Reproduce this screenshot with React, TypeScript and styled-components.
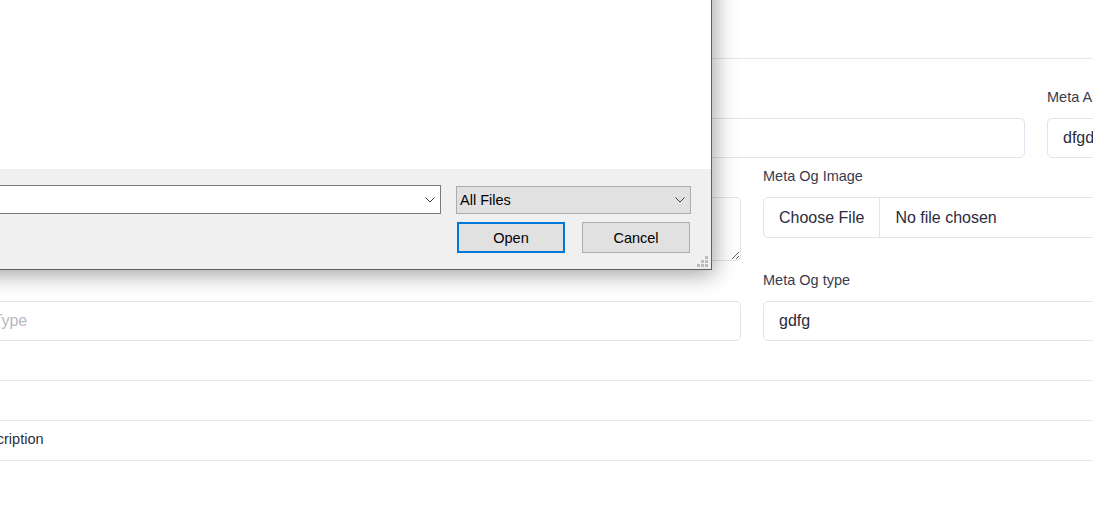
import React from 'react';
import styled, { createGlobalStyle } from 'styled-components';

const GlobalStyle = createGlobalStyle`
  html, body {
    margin: 0;
    padding: 0;
    background: #fff;
    overflow: hidden;
  }
  body {
    font-family: 'Liberation Sans', Arial, sans-serif;
  }
`;

const Screen = styled.div`
  position: relative;
  width: 1093px;
  height: 517px;
  overflow: hidden;
  background: #fff;
`;

// page behind the dialog
const Card = styled.div`
  margin-left: -89px;
  width: 1682px;
  color: #3f4254;
`;
const CardHeader = styled.div`
  height: 58px;
  display: flex;
  align-items: center;
  padding-left: 30px;
  font-size: 17px;
  font-weight: 600;
  border-bottom: 1px solid #e6e5f0;
`;
const CardBody = styled.div`
  padding-top: 28px;
`;
const Row = styled.div<{ $cols: number; $mb: number }>`
  display: grid;
  grid-template-columns: repeat(${({ $cols }) => $cols}, 1fr);
  column-gap: 22px;
  align-items: start;
  margin-bottom: ${({ $mb }) => $mb}px;
`;
const Field = styled.div`
  display: flex;
  flex-direction: column;
  min-width: 0;
`;
const Label = styled.label`
  font-size: 14.5px;
  line-height: 20px;
  margin-bottom: 11px;
  color: #3a3b4c;
`;
const TextInput = styled.input`
  box-sizing: border-box;
  height: 40px;
  padding: 0 15px;
  font-family: 'Liberation Sans', Arial, sans-serif;
  font-size: 16px;
  color: #2b2c3c;
  border: 1px solid #e3e2ee;
  border-radius: 5px;
  outline: none;
  background: #fff;
  &::placeholder {
    color: #b9b8c6;
  }
`;
const TextArea = styled.textarea`
  box-sizing: border-box;
  height: 64px;
  padding: 10px 15px;
  font-family: 'Liberation Sans', Arial, sans-serif;
  font-size: 16px;
  border: 1px solid #e3e2ee;
  border-radius: 5px;
  outline: none;
  resize: vertical;
`;
const FileBox = styled.div`
  box-sizing: border-box;
  height: 41px;
  display: flex;
  align-items: stretch;
  border: 1px solid #e3e2ee;
  border-radius: 5px;
  font-size: 16px;
  color: #2b2c3c;
`;
const FileButton = styled.span`
  display: flex;
  align-items: center;
  padding: 0 15px;
  border-right: 1px solid #e3e2ee;
`;
const FileName = styled.span`
  display: flex;
  align-items: center;
  padding: 0 15px;
`;
const List = styled.div`
  margin-top: 39px;
  border-bottom: 1px solid #e6e5f0;
`;
const ListRow = styled.div`
  box-sizing: border-box;
  height: 40px;
  display: flex;
  align-items: center;
  padding: 0 0 3px 60px;
  border-top: 1px solid #e6e5f0;
  font-size: 14.5px;
  color: #2b2c3c;
`;

// windows open-file dialog on top
const Dialog = styled.div`
  position: absolute;
  left: -202px;
  top: -231px;
  width: 912px;
  height: 499px;
  display: flex;
  flex-direction: column;
  background: #fff;
  border: 1px solid #5f5f5f;
  box-shadow: 2px 4px 22px rgba(0, 0, 0, 0.38);
  font-family: 'Liberation Sans', Arial, sans-serif;
  font-size: 14.5px;
  color: #000;
  z-index: 10;
`;
const FilePane = styled.div`
  flex: 1;
  background: #fff;
`;
const Footer = styled.div`
  position: relative;
  box-sizing: border-box;
  height: 100px;
  padding: 16px 20px 0 20px;
  display: flex;
  flex-direction: column;
  gap: 8px;
  background: #f0f0f0;
`;
const FooterRow = styled.div`
  display: flex;
  align-items: center;
  gap: 15px;
`;
const ButtonRow = styled.div`
  display: flex;
  justify-content: flex-end;
  gap: 17px;
  padding-right: 1px;
`;
const NameLabel = styled.span`
  flex: none;
  margin-right: -5px;
`;
const Combo = styled.div`
  flex: 1;
  box-sizing: border-box;
  height: 29px;
  display: flex;
  align-items: center;
  justify-content: flex-end;
  padding-right: 5px;
  background: #fff;
  border: 1px solid #7a7a7a;
`;
const TypeSelect = styled.div`
  flex: none;
  box-sizing: border-box;
  width: 235px;
  height: 28px;
  display: flex;
  align-items: center;
  justify-content: space-between;
  padding: 0 5px 0 3px;
  background: #e1e1e1;
  border: 1px solid #adadad;
`;
const DlgButton = styled.button<{ $primary?: boolean }>`
  box-sizing: border-box;
  width: 108px;
  height: 31px;
  padding: 0;
  font-family: 'Liberation Sans', Arial, sans-serif;
  font-size: 14.5px;
  color: #000;
  background: #e1e1e1;
  border: ${({ $primary }) => ($primary ? '2px solid #0078d7' : '1px solid #adadad')};
`;
const Grip = styled.svg`
  position: absolute;
  right: 2px;
  bottom: 1px;
`;

function Chevron() {
  return (
    <svg width="10" height="6" viewBox="0 0 10 6">
      <path d="M0.5 0.5 L5 5 L9.5 0.5" fill="none" stroke="#404040" strokeWidth="1" />
    </svg>
  );
}

export default function App() {
  return (
    <Screen>
      <GlobalStyle />
      <Card>
        <CardHeader>SEO Settings</CardHeader>
        <CardBody>
          <Row $cols={3} $mb={8}>
            <Field>
              <Label>Meta Title</Label>
              <TextInput placeholder="Meta Title" />
            </Field>
            <Field>
              <Label>Meta Keywords</Label>
              <TextInput />
            </Field>
            <Field>
              <Label>Meta Author</Label>
              <TextInput defaultValue="dfgdfg" />
            </Field>
          </Row>
          <Row $cols={2} $mb={9}>
            <Field>
              <Label>Meta Description</Label>
              <TextArea />
            </Field>
            <Field>
              <Label>Meta Og Image</Label>
              <FileBox>
                <FileButton>Choose File</FileButton>
                <FileName>No file chosen</FileName>
              </FileBox>
            </Field>
          </Row>
          <Row $cols={2} $mb={0}>
            <Field>
              <Label>Meta Type</Label>
              <TextInput placeholder="Meta Og Type" />
            </Field>
            <Field>
              <Label>Meta Og type</Label>
              <TextInput defaultValue="gdfg" />
            </Field>
          </Row>
          <List>
            <ListRow />
            <ListRow>Description</ListRow>
          </List>
        </CardBody>
      </Card>

      <Dialog>
        <FilePane />
        <Footer>
          <FooterRow>
            <NameLabel>File name:</NameLabel>
            <Combo>
              <Chevron />
            </Combo>
            <TypeSelect>
              <span>All Files</span>
              <Chevron />
            </TypeSelect>
          </FooterRow>
          <ButtonRow>
            <DlgButton $primary>Open</DlgButton>
            <DlgButton>Cancel</DlgButton>
          </ButtonRow>
          <Grip width="12" height="12" viewBox="0 0 12 12">
            <rect x="8" y="0" width="3" height="3" fill="#bdbdbd" />
            <rect x="4" y="4" width="3" height="3" fill="#bdbdbd" />
            <rect x="8" y="4" width="3" height="3" fill="#bdbdbd" />
            <rect x="0" y="8" width="3" height="3" fill="#bdbdbd" />
            <rect x="4" y="8" width="3" height="3" fill="#bdbdbd" />
            <rect x="8" y="8" width="3" height="3" fill="#bdbdbd" />
          </Grip>
        </Footer>
      </Dialog>
    </Screen>
  );
}
